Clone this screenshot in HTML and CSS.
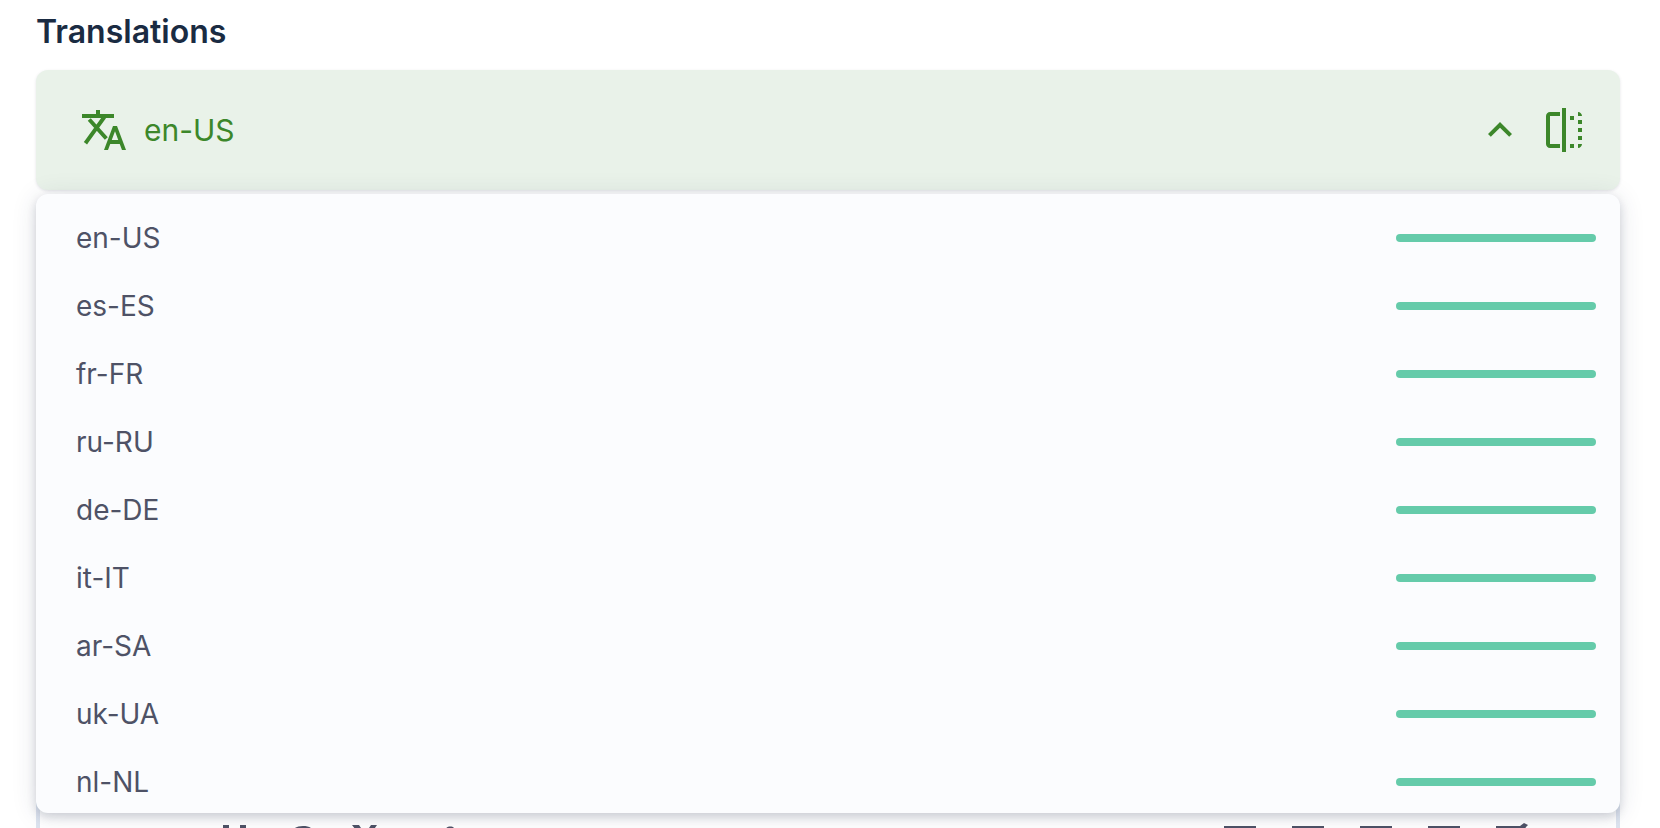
FILE: index.html
```html
<!DOCTYPE html>
<html lang="en">
<head>
<meta charset="utf-8">
<title>Translations</title>
<link rel="stylesheet" href="styles.css">
</head>
<body>
<main class="page">
  <h2 class="title">Translations</h2>
  <div class="dropdown">
    <header class="bar">
      <svg class="ic" viewBox="0 0 24 24" width="48" height="48"><path d="M1 4h7V2h2v2h7v2H1zM18.500 10h-2L12 22h2l1.120-3h4.750L21 22h2l-4.500-12zm-2.620 7l1.620-4.330L19.120 17h-3.240z"/><path class="ic-line" d="M11.800 6L3.300 17.800M5.300 7.500L12.500 15.500"/></svg>
      <span class="current">en-US</span>
      <span class="spacer"></span>
      <svg class="ic" viewBox="0 0 24 24" width="48" height="48"><path d="M12 8l-6 6 1.410 1.410L12 10.830l4.590 4.580L18 14z"/></svg>
      <svg class="ic" viewBox="0 0 24 24" width="48" height="48"><path d="M15 7h2V5h-2v2zm0 14h2v-2h-2v2zm4 0c1.100 0 2-.9 2-2h-2v2zm0-4h2v-2h-2v2zm0-4h2v-2h-2v2zm0-4h2V7h-2v2zm0-6v2h2c0-1.100-.9-2-2-2zM5 5h5V3H5c-1.100 0-2 .9-2 2v14c0 1.100.9 2 2 2h5v-2H5V5zm6-4h2v22h-2V1z"/></svg>
    </header>
    <ul class="menu">
      <li class="row"><span>en-US</span><i class="progress"></i></li>
      <li class="row"><span>es-ES</span><i class="progress"></i></li>
      <li class="row"><span>fr-FR</span><i class="progress"></i></li>
      <li class="row"><span>ru-RU</span><i class="progress"></i></li>
      <li class="row"><span>de-DE</span><i class="progress"></i></li>
      <li class="row"><span>it-IT</span><i class="progress"></i></li>
      <li class="row"><span>ar-SA</span><i class="progress"></i></li>
      <li class="row"><span>uk-UA</span><i class="progress"></i></li>
      <li class="row"><span>nl-NL</span><i class="progress"></i></li>
    </ul>
    <section class="editor">
      <div class="toolbar">
        <div class="tools">
          <svg class="tool" viewBox="0 0 48 48" width="48" height="48"><path d="M13 5h6v16a5 5 0 0 0 11 0V5h6v16a11 11 0 0 1-23 0z"/></svg>
          <svg class="tool" viewBox="0 0 48 48" width="48" height="48"><path d="M25 6c-8 0-12 4-12 9h5c0-3 3-5 7-5s6 2 7 5h5c-1-6-5-9-12-9z"/></svg>
          <svg class="tool" viewBox="0 0 48 48" width="48" height="48"><path d="M6 5h7l6 9 6-9h6L22 18l10 15h-7l-6-10-6 10H6l10-15z"/></svg>
          <svg class="tool" viewBox="0 0 48 48" width="48" height="48"><path d="M31 10c1-4 9-5 10 0 0 3-3 5-6 8h-3c2-3 5-5 5-8s-4-2-4 0z"/></svg>
        </div>
        <div class="tools">
          <svg class="tool" viewBox="0 0 48 48" width="48" height="48"><path d="M8 6h32v4H8zM8 18h20v4H8zM8 30h32v4H8z"/></svg>
          <svg class="tool" viewBox="0 0 48 48" width="48" height="48"><path d="M8 6h32v4H8zM14 18h20v4H14zM8 30h32v4H8z"/></svg>
          <svg class="tool" viewBox="0 0 48 48" width="48" height="48"><path d="M8 6h32v4H8zM20 18h20v4H20zM8 30h32v4H8z"/></svg>
          <svg class="tool" viewBox="0 0 48 48" width="48" height="48"><path d="M8 6h32v4H8zM8 18h32v4H8zM8 30h32v4H8z"/></svg>
          <svg class="tool" viewBox="0 0 48 48" width="48" height="48"><path d="M8 6h24l4-3 4 2-2 2-16 30h-5l10-27H8z"/></svg>
        </div>
      </div>
    </section>
  </div>
</main>
</body>
</html>
```
FILE: styles.css
```css
html, body { margin: 0; height: 100%; overflow: hidden; background: #fff; }
body { font-family: Inter, "Liberation Sans", sans-serif; }
.page { padding: 12px 40px 0 36px; }
.title { margin: 0 0 18px; font-size: 32px; line-height: 40px; font-weight: 600; color: #1a2b42; }
.dropdown { position: relative; }
.bar { display: flex; align-items: center; gap: 16px; height: 120px; padding: 0 32px 0 44px; box-sizing: border-box; background: #e9f2e9; border-radius: 12px; color: #3c872a; fill: #3c872a; box-shadow: 0 1px 3px rgba(60, 70, 90, .15); }
.ic { display: block; flex: none; }
.ic-line { fill: none; stroke: #3c872a; stroke-width: 2; stroke-linecap: square; }
.current { font-size: 30px; line-height: 40px; }
.spacer { flex: 1; }
.menu { position: absolute; z-index: 2; top: 124px; left: 0; right: 0; list-style: none; margin: 0; padding: 10px 24px 0 40px; height: 619px; box-sizing: border-box; overflow: hidden; background: #fbfcfe; border-radius: 12px; box-shadow: 0 4px 10px rgba(40, 50, 80, .18), 0 2px 26px rgba(40, 50, 80, .12); }
.row { display: flex; align-items: center; justify-content: space-between; height: 68px; font-size: 28px; color: #4e5266; }
.progress { display: block; width: 200px; height: 8px; border-radius: 4px; background: #65cbaa; }
.editor { margin-top: 566px; border: solid #dde4ef; border-width: 4px 4px 0; height: 72px; box-sizing: border-box; padding-top: 60px; overflow: hidden; }
.toolbar { display: flex; justify-content: space-between; padding: 0 80px 0 170px; }
.tools { display: flex; gap: 20px; }
.tool { display: block; fill: #4e5266; }
```
